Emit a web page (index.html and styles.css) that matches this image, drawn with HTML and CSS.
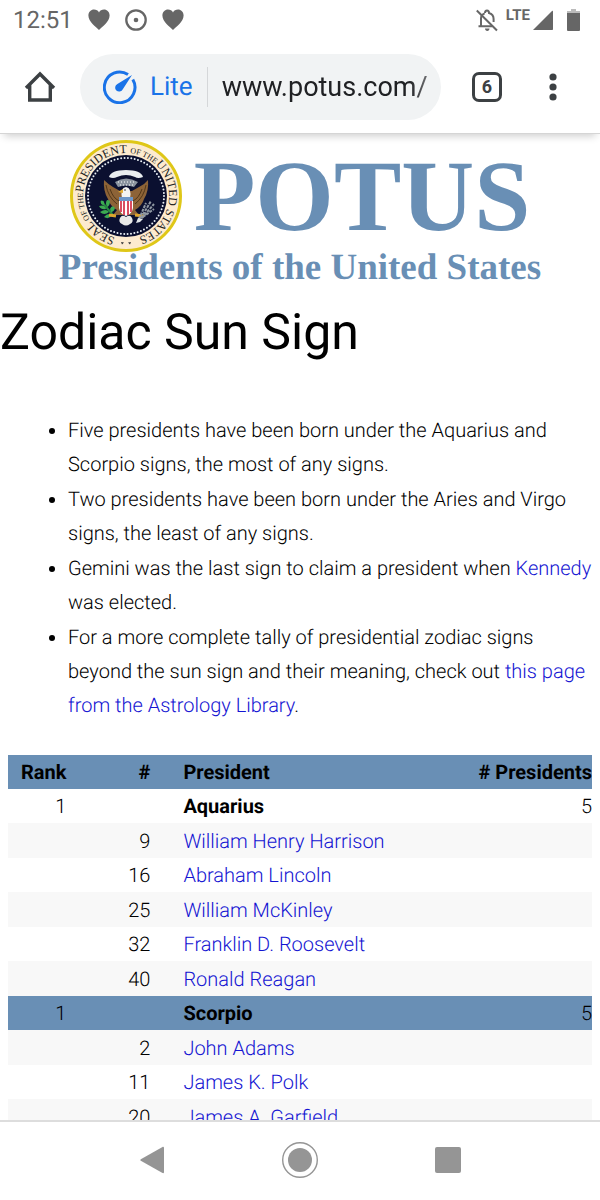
FILE: index.html
```html
<!DOCTYPE html>
<html lang="en">
<head>
    <meta charset="UTF-8">
    <meta name="viewport" content="width=device-width, initial-scale=1.0">
    <title>Zodiac Sun Sign</title>
    <link rel="stylesheet" href="styles.css">
</head>
<body>

    <div class="status-bar">
        <span class="clock">12:51</span>
        <svg class="notice" width="22" height="22" viewBox="0 0 22 22"><path d="M11 21C8 18 .4 13 .4 6.600C.4 3 3 .6 6 .6c2.200 0 4 1 5 2.800C12 1.600 13.800.6 16 .6c3 0 5.600 2.400 5.600 6C21.600 13 14 18 11 21z"/></svg>
        <svg class="notice" width="22" height="22" viewBox="0 0 22 22"><circle cx="11" cy="11" r="9.700" fill="none" stroke="#666" stroke-width="2.300"/><circle cx="11" cy="11" r="2.300"/></svg>
        <svg class="notice" width="22" height="22" viewBox="0 0 22 22"><path d="M11 21C8 18 .4 13 .4 6.600C.4 3 3 .6 6 .6c2.200 0 4 1 5 2.800C12 1.600 13.800.6 16 .6c3 0 5.600 2.400 5.600 6C21.600 13 14 18 11 21z"/></svg>
        <div class="status-right">
            <svg width="22" height="23" viewBox="0 0 22 23">
                <path d="M5 17V9.500C5 7 6.500 5.200 8.700 4.400M9 4C9 2 9.800 1.500 11 1.500S13 2 13 4c2.500.7 4.600 2.800 4.600 6v3M2.500 17.300H16" fill="none" stroke="#666" stroke-width="2"/>
                <path d="M.8 1.500L21 21.500" stroke="#666" stroke-width="2"/>
                <path d="M9 19.500h4.500c0 1.500-.9 2.500-2.200 2.500S9 21 9 19.500z"/>
            </svg>
            <span class="network">LTE</span>
            <svg width="20" height="20" viewBox="0 0 20 20"><path d="M0 20L19 1c.5-.5 1-.3 1 .4V19c0 .6-.4 1-1 1z"/></svg>
            <svg class="battery" width="13" height="22" viewBox="0 0 13 22"><path d="M4 0h5v2h4v2H0V2h4z" fill="#bbb"/><path d="M0 4h13v17q0 1-1 1H1q-1 0-1-1z"/></svg>
        </div>
    </div>

    <div class="toolbar">
        <button class="tool" aria-label="Home">
            <svg width="32" height="32" viewBox="0 0 32 32" fill="none" stroke="#3c4043" stroke-width="3.400"><path d="M2 17L16 3l14 14M5.700 14v15h20.600V14"/></svg>
        </button>
        <div class="address">
            <svg width="34" height="34" viewBox="0 0 34 34">
                <path d="M25 4.500A15.300 15.300 0 1 0 29.800 9.500" fill="none" stroke="#1a73e8" stroke-width="3"/>
                <path d="M29 5L19.800 19.200a4 4 0 1 1-5.400-5.200z" fill="#1a73e8"/>
            </svg>
            <label class="lite" for="url">Lite</label>
            <input class="url" id="url" type="text" value="www.potus.com/">
        </div>
        <button class="tool tabs" aria-label="Tabs">6</button>
        <button class="tool" aria-label="Menu">
            <svg width="8" height="28" viewBox="0 0 8 28" fill="#3c4043"><circle cx="4" cy="4" r="3.600"/><circle cx="4" cy="14" r="3.600"/><circle cx="4" cy="24" r="3.600"/></svg>
        </button>
    </div>

    <main class="page">
        <header class="banner">
            <div class="logo">
                <svg class="seal" width="112" height="112" viewBox="-56 -56 112 112">
                    <defs>
                        <path id="ring" d="M0 43A43 43 0 0 1 0-43A43 43 0 0 1 0 43"/>
                    </defs>
                    <circle r="54.500" fill="#fdebcf" stroke="#dfc718" stroke-width="3"/>
                    <circle r="41" fill="#0b1030"/>
                    <circle r="38" fill="none" stroke="#e8eef5" stroke-width="2" stroke-linecap="round" stroke-dasharray="0 3.410"/>
                    <g class="ring-text">
                        <text><textPath href="#ring" startOffset="11">SEAL</textPath></text>
                        <text class="small"><textPath href="#ring" startOffset="43">OF THE</textPath></text>
                        <text><textPath href="#ring" startOffset="71">PRESIDENT</textPath></text>
                        <text class="small"><textPath href="#ring" startOffset="139">OF THE</textPath></text>
                        <text><textPath href="#ring" startOffset="167">UNITED</textPath></text>
                        <text><textPath href="#ring" startOffset="215">STATES</textPath></text>
                    </g>
                    <path d="M-5 46l3 .4-2 2zM5 46l-3 .4 2 2z" fill="#333"/>
                    <!-- clouds and stars over the eagle -->
                    <path d="M-17-19Q-15-26 0-26T17-19Q12-17 9-19Q0-23-9-19Q-13-17-17-19z" fill="#e9edf0"/>
                    <path d="M-11-14Q0-21 12-14L8-9Q0-12-8-9z" fill="#8b94a0"/>
                    <path d="M-8-14H9M-6-11H7" stroke="#fff" stroke-dasharray="1 2"/>
                    <!-- wings -->
                    <path d="M-22-16Q-18-12-13-9L-6-5H6L13-9Q19-12 22-16Q23-5 18 3Q16 10 9 14L13 19H-13L-9 14Q-16 10-18 3Q-23-5-22-16z" fill="#8d6337"/>
                    <path d="M-20-11Q-18 1-9 8M-16-7Q-13 2-7 5M20-11Q18 1 9 8M16-7Q13 2 7 5" fill="none" stroke="#513719"/>
                    <path d="M-4 2Q-6-8 0-9Q6-8 4 2z" fill="#f4f4f2"/>
                    <path d="M-3-7L-8-4l5 1z" fill="#e4ae33"/>
                    <circle cx="-1" cy="-6" r=".8" fill="#222"/>
                    <!-- shield -->
                    <path d="M-7 1H7V12Q6 18 0 20Q-6 18-7 12z" fill="#fff"/>
                    <path d="M-5 5v11M-2 5v14M2 5v14M5 5v11" stroke="#d94c62" stroke-width="2"/>
                    <path d="M-7 1H7V5H-7z" fill="#6d96c8"/>
                    <!-- tail, olive branch and arrows -->
                    <path d="M-6 22Q-4 18 0 21Q4 18 6 22Q8 26 4 28Q0 31-4 28Q-8 26-6 22z" fill="#e9e9e7"/>
                    <path d="M-25 5L-13 19" stroke="#278b42" stroke-width="2"/>
                    <path d="M-25 5q4-1 3 4q-4 0-3-4zM-27 10q6-2 7 3q-5 1-7-3zM-20 8q0-6 4-3q0 5-3 6zM-26 16q6-4 9 0q-5 4-9 0zM-16 13q2-5 5-1q-1 4-4 4zM-22 21q4-5 8-2q-3 5-8 2z" fill="#3cab51"/>
                    <path d="M-17 19L-10 20M9 19L18 20" stroke="#dda52f" stroke-width="3"/>
                    <path d="M13 23L20 7M15 22L25 5M16 22L28 8M17 21L28 13" stroke="#9099a3" stroke-width="2" stroke-dasharray="3 1"/>
                    <path d="M12 22l5 1-3 3-4 1z" fill="#e1e5e8"/>
                </svg>
                <span class="wordmark">POTUS</span>
            </div>
            <div class="tagline">Presidents of the United States</div>
        </header>

        <h1>Zodiac Sun Sign</h1>

        <ul class="facts">
            <li>Five presidents have been born under the Aquarius and Scorpio signs, the most of any signs.</li>
            <li>Two presidents have been born under the Aries and Virgo signs, the least of any signs.</li>
            <li>Gemini was the last sign to claim a president when <a href="#">Kennedy</a> was elected.</li>
            <li>For a more complete tally of presidential zodiac signs beyond the sun sign and their meaning, check out <a href="#">this page from the Astrology Library</a>.</li>
        </ul>

        <table class="signs">
            <thead>
                <tr class="blue"><th class="rank">Rank</th><th class="number">#</th><th class="name">President</th><th class="count"># Presidents</th></tr>
            </thead>
            <tbody>
                <tr><td class="rank">1</td><td></td><th class="name">Aquarius</th><td class="count">5</td></tr>
                <tr><td></td><td class="number">9</td><td class="name"><a href="#">William Henry Harrison</a></td><td></td></tr>
                <tr><td></td><td class="number">16</td><td class="name"><a href="#">Abraham Lincoln</a></td><td></td></tr>
                <tr><td></td><td class="number">25</td><td class="name"><a href="#">William McKinley</a></td><td></td></tr>
                <tr><td></td><td class="number">32</td><td class="name"><a href="#">Franklin D. Roosevelt</a></td><td></td></tr>
                <tr><td></td><td class="number">40</td><td class="name"><a href="#">Ronald Reagan</a></td><td></td></tr>
                <tr class="blue"><td class="rank">1</td><td></td><th class="name">Scorpio</th><td class="count">5</td></tr>
                <tr><td></td><td class="number">2</td><td class="name"><a href="#">John Adams</a></td><td></td></tr>
                <tr><td></td><td class="number">11</td><td class="name"><a href="#">James K. Polk</a></td><td></td></tr>
                <tr><td></td><td class="number">20</td><td class="name"><a href="#">James A. Garfield</a></td><td></td></tr>
            </tbody>
        </table>
    </main>

    <nav class="nav-bar">
        <button aria-label="Back"><svg width="24" height="28" viewBox="0 0 24 28"><path d="M22.500 1c.8-.4 1.500 0 1.500.8v24.400c0 .8-.7 1.200-1.500.8L.8 14.800q-1-.8 0-1.600z"/></svg></button>
        <button aria-label="Home"><svg width="38" height="38" viewBox="0 0 38 38"><circle cx="19" cy="19" r="17.300" fill="none" stroke="#959595" stroke-width="1.400"/><circle cx="19" cy="19" r="12"/></svg></button>
        <button aria-label="Recent apps"><svg width="26" height="26" viewBox="0 0 26 26"><rect width="26" height="26" rx="2"/></svg></button>
    </nav>

</body>
</html>
```
FILE: styles.css
```css
* {
    box-sizing: border-box;
}

body {
    display: flex;
    flex-direction: column;
    height: 100vh;
    margin: 0;
    background-color: #fff;
    color: #000;
    font-family: Roboto, sans-serif;
    font-size: 20px;
    text-rendering: geometricPrecision;
}

svg {
    display: block;
    flex: none;
}

button {
    display: flex;
    align-items: center;
    justify-content: center;
    padding: 0;
    border: 0;
    background: none;
    cursor: pointer;
}

a {
    color: #1414d2;
    text-decoration: none;
}

.status-bar {
    display: flex;
    align-items: center;
    flex: none;
    height: 40px;
    padding: 0 20px 0 13px;
    color: #666;
    fill: #666;
}

.clock {
    font-size: 24px;
    line-height: 40px;
}

.notice {
    margin-left: 15px;
}

.status-right {
    display: flex;
    align-items: center;
    margin-left: auto;
}

.network {
    margin: 0 3px 10px 8px;
    font-size: 15px;
    line-height: 16px;
    font-weight: bold;
}

.battery {
    margin-left: 14px;
}

.toolbar {
    display: flex;
    align-items: center;
    flex: none;
    height: 94px;
    padding: 0 34px 0 24px;
    border-bottom: 1px solid #d5d5d5;
    box-shadow: 0 6px 8px -4px rgba(0, 0, 0, 0.2);
}

.tool {
    flex: none;
    min-width: 26px;
}

.address {
    display: flex;
    align-items: center;
    flex: 1;
    min-width: 0;
    height: 66px;
    margin: 0 31px 0 24px;
    padding: 0 12px 0 23px;
    border-radius: 33px;
    background-color: #f1f3f4;
}

.lite {
    margin-left: 13px;
    padding-right: 14px;
    border-right: 1px solid #d5d7d9;
    color: #1a73e8;
    font-size: 26px;
    line-height: 40px;
}

.url {
    flex: 1;
    min-width: 0;
    padding: 0 0 0 14px;
    border: 0;
    outline: 0;
    background: none;
    color: #202124;
    font-family: inherit;
    font-size: 27px;
    -webkit-mask-image: linear-gradient(to left, rgba(0, 0, 0, 0.6), #000 20px);
    mask-image: linear-gradient(to left, rgba(0, 0, 0, 0.6), #000 20px);
}

.tabs {
    width: 30px;
    height: 30px;
    margin-right: 38px;
    border: 3px solid #3c4043;
    border-radius: 7px;
    color: #3c4043;
    font-family: Roboto, sans-serif;
    font-size: 18px;
    font-weight: bold;
}

.page {
    flex: 1;
    min-height: 0;
    overflow: hidden;
}

.banner {
    padding-top: 6px;
    color: #698fb5;
    font-family: "Liberation Serif", serif;
    font-weight: bold;
    text-align: center;
}

.logo {
    display: flex;
    align-items: center;
    justify-content: center;
    gap: 12px;
}

.wordmark {
    font-size: 101px;
    line-height: 112px;
}

.tagline {
    font-size: 37px;
    line-height: 32px;
}

.ring-text {
    fill: #222;
    font-weight: normal;
    font-size: 12px;
}

.ring-text .small {
    font-size: 8px;
}

h1 {
    margin: 19px 0 0;
    font-size: 50px;
    line-height: 60px;
    font-weight: normal;
}

.facts {
    margin: 50px 0 33px;
    padding: 0 8px 0 68px;
    font-weight: 300;
    line-height: 34px;
}

.facts li {
    margin-bottom: 1px;
}

.signs {
    width: calc(100% - 16px);
    margin: 0 8px;
    border-collapse: collapse;
    font-weight: 300;
    line-height: 34px;
}

.signs th,
.signs td {
    padding: 0;
    text-align: right;
}

.signs th {
    font-weight: bold;
}

.signs tbody tr:nth-child(even) {
    height: 35px;
    background-color: #f8f8f8;
}

.signs .blue,
.signs tbody .blue {
    background-color: #698fb5;
}

.signs .rank {
    width: 10%;
}

.signs .number {
    width: 84px;
}

.signs .name {
    padding-left: 33px;
    text-align: left;
}

.nav-bar {
    display: flex;
    align-items: center;
    justify-content: center;
    flex: none;
    gap: 110px;
    height: 80px;
    padding-bottom: 2px;
    border-top: 2px solid #ddd;
    background-color: #fff;
    fill: #959595;
}

.nav-bar button {
    width: 38px;
}
```
